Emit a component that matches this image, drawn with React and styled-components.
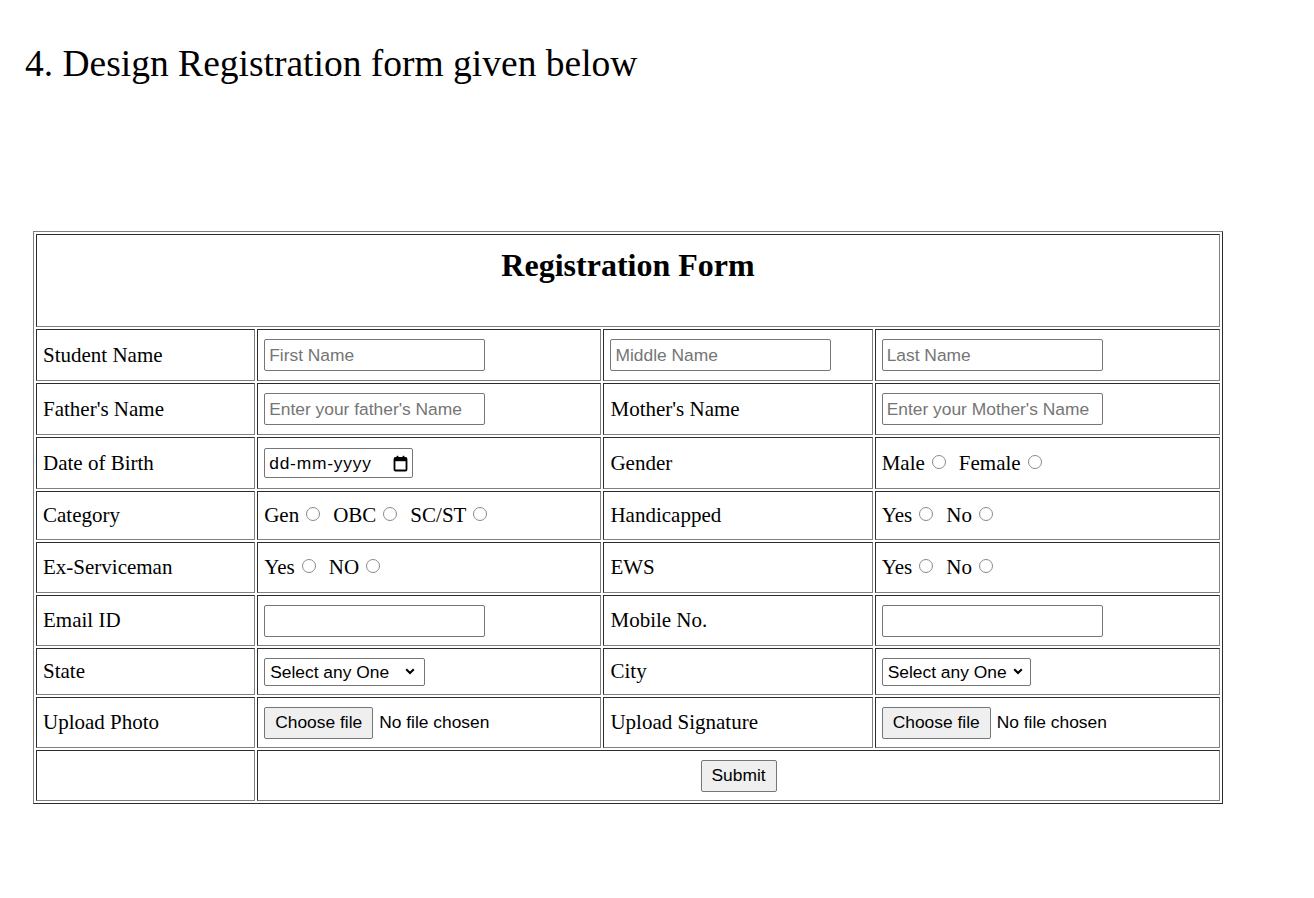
import styled, { createGlobalStyle } from "styled-components";

const GlobalStyle = createGlobalStyle`
  body {
    margin: 0;
    background: #fff;
    color: #000;
    font-family: "Liberation Serif", "Times New Roman", serif;
  }
`;

const Page = styled.div`
  padding: 40px 0 40px 25px;
`;

const Heading = styled.h1`
  margin: 0;
  font-size: 37.5px;
  font-weight: normal;
  line-height: 48px;
`;

const FormTable = styled.table`
  width: 1190px;
  margin: 143px 0 0 8px;
  table-layout: fixed;
  border: 1px outset #808080;
  border-spacing: 2px;
`;

const Cell = styled.td`
  box-sizing: border-box;
  height: ${(p) => p.$h || 51}px;
  padding: 0 6px;
  border: 1px inset #808080;
  font-size: 21px;
  vertical-align: middle;
  text-align: ${(p) => (p.$center ? "center" : "left")};
`;

const TitleCell = styled.td`
  box-sizing: border-box;
  height: 93px;
  padding: 12px 6px 0;
  border: 1px inset #808080;
  vertical-align: top;
  text-align: center;
  font-size: 32px;
  font-weight: bold;
`;

const TextInput = styled.input`
  box-sizing: border-box;
  width: 221px;
  height: 32px;
  padding: 0 4px;
  border: 1px solid #767676;
  border-radius: 2px;
  font-family: "Liberation Sans", Arial, sans-serif;
  font-size: 17.4px;
  color: #000;
  display: block;

  &::placeholder {
    color: #757575;
  }
`;

const DateField = styled.div`
  box-sizing: border-box;
  width: 149px;
  height: 30px;
  padding: 0 4px;
  border: 1px solid #767676;
  border-radius: 2px;
  display: flex;
  align-items: center;
  justify-content: space-between;
  font-family: "Liberation Sans", Arial, sans-serif;
  font-size: 17.4px;
  letter-spacing: 0.8px;
  color: #000;
`;

const RadioGroup = styled.div`
  display: flex;
  align-items: center;
  gap: 13px;
`;

const RadioItem = styled.label`
  display: flex;
  align-items: center;
  gap: 7px;
`;

const Radio = styled.input.attrs({ type: "radio" })`
  appearance: none;
  box-sizing: border-box;
  width: 14px;
  height: 14px;
  margin: 0 0 3px;
  border: 1px solid #8a8a8a;
  border-radius: 50%;
  background: #fff;
`;

const SelectBox = styled.div`
  box-sizing: border-box;
  width: ${(p) => p.$w}px;
  height: 28px;
  padding: 0 ${(p) => p.$pr}px 0 0;
  border: 1px solid #767676;
  border-radius: 2px;
  display: flex;
  align-items: center;
  background: #fff;

  select {
    appearance: none;
    flex: 1;
    min-width: 0;
    height: 100%;
    padding: 0 0 0 5px;
    border: none;
    background: transparent;
    font-family: "Liberation Sans", Arial, sans-serif;
    font-size: 17.4px;
    color: #000;
    outline: none;
  }
`;

const FileField = styled.div`
  display: flex;
  align-items: center;
  gap: 6px;
  font-family: "Liberation Sans", Arial, sans-serif;
  font-size: 17.4px;
`;

const GreyButton = styled.button`
  box-sizing: border-box;
  height: 32px;
  padding: 0 ${(p) => p.$px || 10}px;
  border: 1px solid #767676;
  border-radius: 2px;
  background: #efefef;
  color: #000;
  font-family: "Liberation Sans", Arial, sans-serif;
  font-size: 17.4px;
`;

const Chevron = () => (
  <svg width="10" height="7" viewBox="0 0 10 7">
    <path d="M1.2 1.2 L5 5 L8.8 1.2" fill="none" stroke="#000" strokeWidth="2" />
  </svg>
);

const CalendarIcon = () => (
  <svg width="15" height="17" viewBox="0 0 15 17">
    <rect x="1.5" y="3" width="12" height="12.5" rx="1" fill="none" stroke="#000" strokeWidth="1.8" />
    <rect x="1.5" y="3" width="12" height="3.2" fill="#000" />
    <rect x="3.6" y="0.8" width="1.8" height="3" fill="#000" />
    <rect x="9.6" y="0.8" width="1.8" height="3" fill="#000" />
  </svg>
);

const Radios = ({ name, options }) => (
  <RadioGroup>
    {options.map((o) => (
      <RadioItem key={o}>
        {o}
        <Radio name={name} />
      </RadioItem>
    ))}
  </RadioGroup>
);

const Select = ({ w, pr }) => (
  <SelectBox $w={w} $pr={pr}>
    <select defaultValue="">
      <option value="">Select any One</option>
    </select>
    <Chevron />
  </SelectBox>
);

const FileInput = () => (
  <FileField>
    <GreyButton type="button" $px={10}>
      Choose file
    </GreyButton>
    No file chosen
  </FileField>
);

export default function App() {
  return (
    <>
      <GlobalStyle />
      <Page>
        <Heading>4. Design Registration form given below</Heading>
        <FormTable>
          <colgroup>
            <col style={{ width: 219 }} />
            <col style={{ width: 344 }} />
            <col style={{ width: 269 }} />
            <col style={{ width: 345 }} />
          </colgroup>
          <tbody>
            <tr>
              <TitleCell colSpan={4}>Registration Form</TitleCell>
            </tr>
            <tr>
              <Cell $h={52}>Student Name</Cell>
              <Cell $h={52}>
                <TextInput placeholder="First Name" />
              </Cell>
              <Cell $h={52}>
                <TextInput placeholder="Middle Name" />
              </Cell>
              <Cell $h={52}>
                <TextInput placeholder="Last Name" />
              </Cell>
            </tr>
            <tr>
              <Cell $h={52}>Father's Name</Cell>
              <Cell $h={52}>
                <TextInput placeholder="Enter your father's Name" />
              </Cell>
              <Cell $h={52}>Mother's Name</Cell>
              <Cell $h={52}>
                <TextInput placeholder="Enter your Mother's Name" />
              </Cell>
            </tr>
            <tr>
              <Cell $h={52}>Date of Birth</Cell>
              <Cell $h={52}>
                <DateField>
                  <span>dd-mm-yyyy</span>
                  <CalendarIcon />
                </DateField>
              </Cell>
              <Cell $h={52}>Gender</Cell>
              <Cell $h={52}>
                <Radios name="gender" options={["Male", "Female"]} />
              </Cell>
            </tr>
            <tr>
              <Cell $h={49}>Category</Cell>
              <Cell $h={49}>
                <Radios name="category" options={["Gen", "OBC", "SC/ST"]} />
              </Cell>
              <Cell $h={49}>Handicapped</Cell>
              <Cell $h={49}>
                <Radios name="handicapped" options={["Yes", "No"]} />
              </Cell>
            </tr>
            <tr>
              <Cell $h={51}>Ex-Serviceman</Cell>
              <Cell $h={51}>
                <Radios name="exservice" options={["Yes", "NO"]} />
              </Cell>
              <Cell $h={51}>EWS</Cell>
              <Cell $h={51}>
                <Radios name="ews" options={["Yes", "No"]} />
              </Cell>
            </tr>
            <tr>
              <Cell $h={51}>Email ID</Cell>
              <Cell $h={51}>
                <TextInput type="email" />
              </Cell>
              <Cell $h={51}>Mobile No.</Cell>
              <Cell $h={51}>
                <TextInput type="tel" />
              </Cell>
            </tr>
            <tr>
              <Cell $h={47}>State</Cell>
              <Cell $h={47}>
                <Select w={161} pr={9} />
              </Cell>
              <Cell $h={47}>City</Cell>
              <Cell $h={47}>
                <Select w={149} pr={7} />
              </Cell>
            </tr>
            <tr>
              <Cell $h={51}>Upload Photo</Cell>
              <Cell $h={51}>
                <FileInput />
              </Cell>
              <Cell $h={51}>Upload Signature</Cell>
              <Cell $h={51}>
                <FileInput />
              </Cell>
            </tr>
            <tr>
              <Cell $h={51}></Cell>
              <Cell $h={51} colSpan={3} $center>
                <GreyButton type="submit">Submit</GreyButton>
              </Cell>
            </tr>
          </tbody>
        </FormTable>
      </Page>
    </>
  );
}
